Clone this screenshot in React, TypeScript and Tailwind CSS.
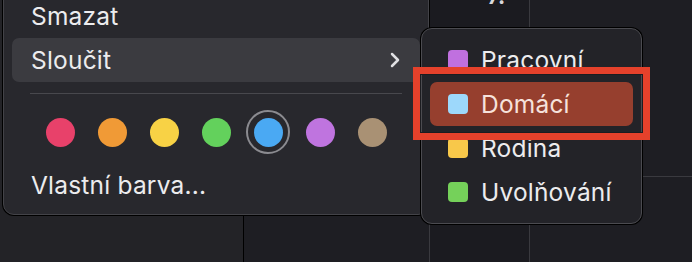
import { ChevronRight } from 'lucide-react'

const swatches = ['#e8416a', '#f09a36', '#f8d245', '#63d15c', '#4aa9f3', '#bf74df', '#a99174']

const calendars = [
  { name: 'Pracovní', color: '#c070df' },
  { name: 'Domácí', color: '#9dd8fb', active: true },
  { name: 'Rodina', color: '#f8c84a' },
  { name: 'Uvolňování', color: '#75d15a' },
]

export default function App() {
  return (
    <div
      className="relative h-[262px] w-[692px] overflow-hidden bg-[#1e1e23] text-[#ececee]"
      style={{ fontFamily: 'Inter, "Noto Sans", sans-serif' }}
    >
      {/* calendar grid behind the menus */}
      <div className="absolute inset-0 flex">
        <div className="w-[243px] bg-[#232327]" />
        <div className="w-px bg-black" />
        <div className="w-[185px]" />
        <div className="w-px bg-[#3a3a3f]" />
        <div className="relative w-[99px] bg-[#1b1b20]">
          <span className="absolute left-[57px] top-[-19px] text-[24px] font-semibold leading-[30px] text-[#d8d8dc]">7.</span>
        </div>
        <div className="w-px bg-[#3a3a3f]" />
        <div className="flex flex-1 flex-col">
          <div className="h-[176px]" />
          <div className="h-px bg-[#3a3a3f]" />
        </div>
      </div>

      {/* context menu */}
      <div className="absolute left-[3px] top-[-14px] w-[426px] rounded-[11px] border border-[#434348] bg-[#28282d] pb-[7px] pt-[7px] shadow-[0_0_0_1px_#000]">
        <div className="mx-[8px] flex h-[44px] items-center pl-[19px] text-[24.5px] tracking-[0.2px]">Smazat</div>
        <div className="mx-[8px] flex h-[44px] items-center justify-between rounded-[7px] bg-[#3b3b40] pl-[19px] pr-[13px] text-[24.5px] tracking-[0.2px]">
          <span>Sloučit</span>
          <ChevronRight className="h-[24px] w-[24px] text-[#e0e0e3]" strokeWidth={2.5} />
        </div>
        <div className="ml-[26px] mr-[26px] mt-[11px] h-px bg-[#48484d]" />
        <div className="mt-[16px] flex h-[44px] gap-[8px] pl-[34px]">
          {swatches.map((c, i) => (
            <div
              key={c}
              className={`flex h-[44px] w-[44px] items-center justify-center rounded-full ${
                i === 4 ? 'border-2 border-[#8b8b90]' : ''
              }`}
            >
              <div className="h-[29px] w-[29px] rounded-full" style={{ backgroundColor: c }} />
            </div>
          ))}
        </div>
        <div className="mx-[8px] mt-[9px] flex h-[44px] items-center pl-[19px] text-[24.5px] tracking-[0.2px]">
          Vlastní barva...
        </div>
      </div>

      {/* submenu */}
      <div className="absolute left-[421px] top-[28px] w-[221px] rounded-[11px] border border-[#4b4b50] bg-[#232328] py-[9px] shadow-[0_0_0_1px_#000]">
        {calendars.map((cal) => (
          <div
            key={cal.name}
            className={`mx-[8px] flex h-[44px] items-center gap-[13px] rounded-[7px] pl-[18px] text-[24.5px] tracking-[0.2px] ${
              cal.active ? 'bg-[#963f2e] text-[#f6e2dc]' : ''
            }`}
          >
            <div className="h-[20px] w-[20px] rounded-[4px]" style={{ backgroundColor: cal.color }} />
            <span>{cal.name}</span>
          </div>
        ))}
      </div>

      {/* red highlight box */}
      <div className="absolute left-[413px] top-[67px] h-[73px] w-[237px] border-[7px] border-[#e5412b]">
        <div className="h-full w-full border-[1px] border-[#1c1c20]" />
      </div>
    </div>
  )
}
